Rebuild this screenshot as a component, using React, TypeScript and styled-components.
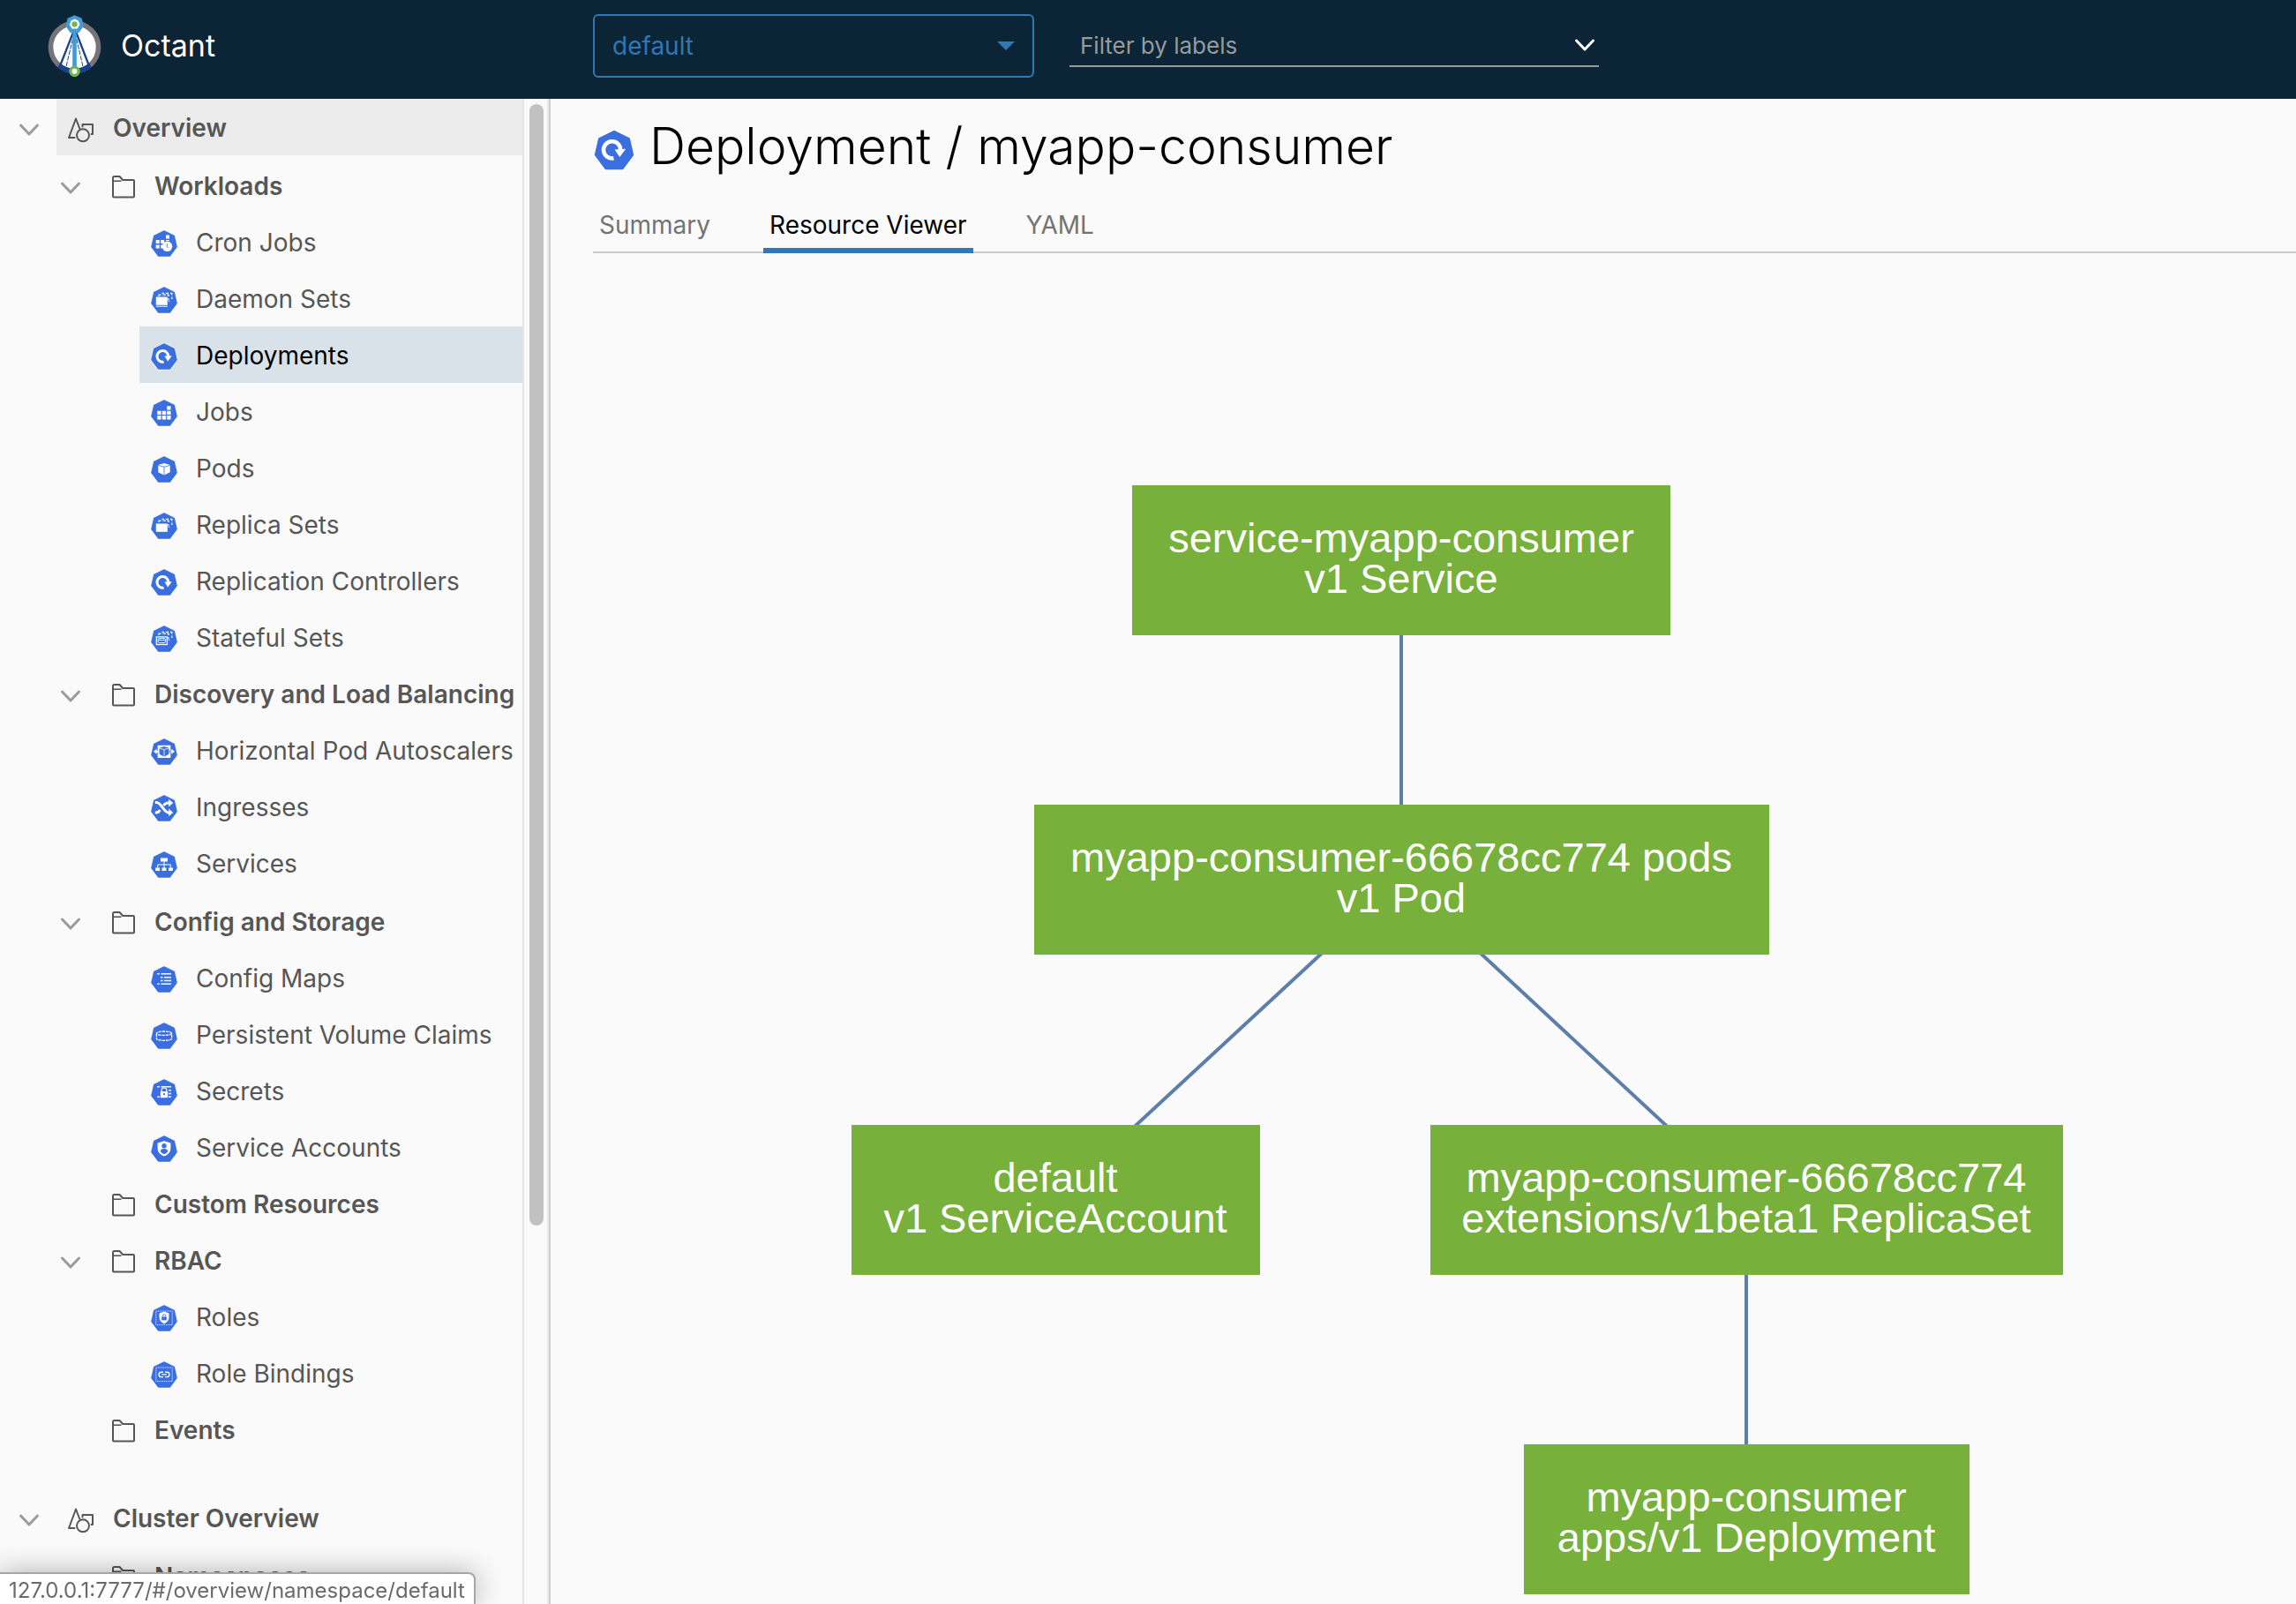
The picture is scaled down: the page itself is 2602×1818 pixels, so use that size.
import React, { useState } from 'react';
import styled, { createGlobalStyle } from 'styled-components';

const colors = {
  header: '#0b2536',
  page: '#fafafa',
  text: '#565656',
  action: '#2f78b5',
  kube: '#3b6fe0',
  node: '#77b03a',
  edge: '#5c7ea8',
};

const uiFont = `Inter, "Open Sans", "Liberation Sans", sans-serif`;

const GlobalStyle = createGlobalStyle`
  *, *::before, *::after { box-sizing: border-box; }
  body {
    margin: 0;
    background: ${colors.page};
    color: ${colors.text};
    font-family: ${uiFont};
  }
  button, input, select { font: inherit; }
`;

/* ---------- Icons ---------- */

type KubeKind =
  | 'cron' | 'daemon' | 'deploy' | 'job' | 'pod' | 'replica' | 'stateful'
  | 'hpa' | 'ingress' | 'service' | 'config' | 'pvc' | 'secret' | 'account'
  | 'role' | 'binding';

const K = colors.kube;

const StackedOutline = () => (
  <g fill="none" stroke="#fff" strokeWidth="1.2">
    <path d="M9 11V9.2H11.5M13.5 9.2H17M18.5 9.2H20V11M20 13v2.5" />
    <path d="M12.5 7.3H15M17 7.3H20M22 7.3H23.8V9.5M23.8 11.5V14M21.2 16.5H20" />
  </g>
);

const ListLines = () => (
  <path
    d="M7.3 8.8h2.5M11.5 8.8H23M11 12.7h2.5M15 12.7h8M11 16.5h2.5M15 16.5h8M7.3 20.3h2.5M11.5 20.3H23"
    stroke="#fff"
    strokeWidth="1.5"
  />
);

const Frame = () => (
  <rect x="5.8" y="7" width="18.4" height="15.6" fill="none" stroke="#fff" strokeWidth="0.8" strokeDasharray="1.2 0.8" />
);

const glyphs: Record<KubeKind, React.ReactNode> = {
  cron: (
    <g fill="#fff">
      <path d="M5.7 11h4v4h-4zM11.2 11h4v4h-4zM5.7 16.5h4v4h-4zM11.2 16.5h2v4h-2zM17 5.5h4v4h-4zM17 11h4v1h-4z" />
      <circle cx="18.5" cy="18.3" r="5.8" />
      <path d="M18.3 15.2v3.6l1.4 1.4" fill="none" stroke={K} strokeWidth="0.9" />
    </g>
  ),
  daemon: (
    <g>
      <path d="M5.8 11.5h13v9.3h-13zM5.8 21.8h13v1h-13z" fill="#fff" />
      <StackedOutline />
    </g>
  ),
  replica: (
    <g>
      <path d="M5.8 12.5h13v9.3h-13z" fill="#fff" />
      <StackedOutline />
    </g>
  ),
  stateful: (
    <g>
      <rect x="6.4" y="12.9" width="12" height="8.6" fill="none" stroke="#fff" strokeWidth="1.3" />
      <ellipse cx="12.4" cy="15.5" rx="4.2" ry="1.1" fill="none" stroke="#fff" strokeWidth="1" />
      <path d="M8.2 15.5v3c0 1.6 8.4 1.6 8.4 0v-3" fill="none" stroke="#fff" strokeWidth="1" />
      <StackedOutline />
    </g>
  ),
  deploy: (
    <g>
      <path d="M14.6 21.2A6.4 6.4 0 1 1 19.8 15" fill="none" stroke="#fff" strokeWidth="3" />
      <path d="M15.4 14.6L23.8 14.2L19.2 20.4Z" fill="#fff" />
    </g>
  ),
  job: (
    <path
      d="M7.3 12.7h4.3v4.3H7.3zM12.8 12.7h4.3v4.3h-4.3zM18.2 12.7h4.3v4.3h-4.3zM7.3 18.1h4.3v4.3H7.3zM12.8 18.1h4.3v4.3h-4.3zM18.2 18.1h4.3v4.3h-4.3zM18.2 7.2h4.3v4.3h-4.3z"
      fill="#fff"
    />
  ),
  pod: (
    <g>
      <path d="M8.3 10.1L15 8L21.7 10.1V18.2L15 21.4L8.3 18.2Z" fill="#fff" />
      <path d="M8.3 10.4L15 12.2L21.7 10.4M15 12.2V21.4" fill="none" stroke={K} strokeWidth="0.8" />
    </g>
  ),
  hpa: (
    <g>
      <path d="M7.7 7.8h14.6v14.2H7.7zM3 14.8l3.6-3v2H9v2H6.6v2zM27 14.8l-3.6-3v2H21v2h2.4v2z" fill="#fff" />
      <path d="M9.6 10.8L15 9L20.4 10.8V17.8L15 20.8L9.6 17.8Z" fill={K} />
      <path d="M9.6 11L15 12.6L20.4 11M15 12.6V20.8" fill="none" stroke="#fff" strokeWidth="0.8" />
    </g>
  ),
  ingress: (
    <g>
      <path d="M4.8 8.5H6.5C11.5 8.5 15 20 19.5 20H21" fill="none" stroke="#fff" strokeWidth="3" />
      <path d="M4.8 20H6.5C8.2 20 9.4 18.8 10.5 17.2M14.5 12C16 9.8 17.5 9 19.5 9H21" fill="none" stroke="#fff" strokeWidth="3" />
      <path d="M20.2 4.8L25.2 9L20.2 13.4ZM20.2 15.6L25.2 20L20.2 24.2Z" fill="#fff" />
    </g>
  ),
  service: (
    <g>
      <path d="M11 7.6h8v3.9h-8zM5.2 18.4h4.9v3.6H5.2zM12.5 18.4h4.9v3.6h-4.9zM20 18.4h4.9v3.6H20z" fill="#fff" />
      <path d="M15 11v8M7.7 18.5V15H22.3V18.5" fill="none" stroke="#fff" strokeWidth="1" />
    </g>
  ),
  config: <ListLines />,
  pvc: (
    <g fill="none" stroke="#fff" strokeWidth="1.3" strokeDasharray="3.4 0.8">
      <ellipse cx="15" cy="12.2" rx="8.6" ry="2.2" />
      <path d="M6.4 12.5V18.2C6.4 21 23.6 21 23.6 18.2V12.5" />
    </g>
  ),
  secret: (
    <g>
      <ListLines />
      <path d="M10 12h10v10H10z" fill={K} />
      <path d="M10.8 14h8.4v7.2h-8.4z" fill="#fff" />
      <path d="M12.2 14V12.6a2.8 2.6 0 0 1 5.6 0V14" fill="none" stroke="#fff" strokeWidth="1.2" />
      <circle cx="15" cy="17.2" r="1.1" fill={K} />
    </g>
  ),
  account: (
    <g>
      <path d="M15 6.2L22.4 8.6V14.5C22.4 18.8 19.5 21.8 15 23.4C10.5 21.8 7.6 18.8 7.6 14.5V8.6Z" fill="#fff" />
      <circle cx="15" cy="11.8" r="2.7" fill={K} />
      <path d="M10.8 18a4.2 3 0 0 1 8.4 0A6 6 0 0 1 15 21.2A6 6 0 0 1 10.8 18Z" fill={K} />
    </g>
  ),
  role: (
    <g>
      <Frame />
      <path d="M15 7.5L20.5 9.4V14C20.5 17.4 18.3 19.9 15 21.4C11.7 19.9 9.5 17.4 9.5 14V9.4Z" fill="#fff" />
      <path d="M12.2 13.4h5.6v4h-5.6z" fill={K} />
      <path d="M13.3 13.5V12.4a1.7 1.7 0 0 1 3.4 0v1.1" fill="none" stroke={K} strokeWidth="0.9" />
    </g>
  ),
  binding: (
    <g>
      <Frame />
      <path
        d="M14 12.2H11.8a2.7 2.7 0 0 0 0 5.4H14M16 12.2H18.2a2.7 2.7 0 0 1 0 5.4H16M12.2 14.9H17.8"
        fill="none"
        stroke="#fff"
        strokeWidth="1.4"
      />
    </g>
  ),
};

const heptagon = 'M15 1L26.2 6.5L29 18.7L21.3 29H8.7L1 18.7L3.8 6.5Z';

const KubeIcon = ({ kind, size = 32 }: { kind: KubeKind; size?: number }) => (
  <svg width={size} height={size} viewBox="-1 -1 32 32" aria-hidden="true">
    <path d={heptagon} fill={K} stroke="#fff" strokeWidth="3" strokeLinejoin="round" />
    <path d={heptagon} fill={K} stroke={K} strokeWidth="1.6" strokeLinejoin="round" />
    {glyphs[kind]}
  </svg>
);

const FolderIcon = () => (
  <svg width="32" height="32" viewBox="0 0 32 32" fill="none" stroke={colors.text} strokeWidth="2" strokeLinejoin="round" aria-hidden="true">
    <path d="M5 26.5V5.5Q5 4 6.500 4H12.5L16.2 8H28Q29 8 29 9V26.5Q29 27.5 28 27.5H6Q5 27.5 5 26.5Z" />
    <path d="M5 9.2H14.5" strokeWidth="1.6" />
  </svg>
);

const ShapesIcon = () => (
  <svg width="32" height="32" viewBox="1 -1 32 32" fill="none" stroke={colors.text} strokeWidth="2" strokeLinejoin="round" strokeLinecap="round" aria-hidden="true">
    <path d="M9.5 25H3L11 3.5L15.2 14.5" />
    <path d="M18.5 12.5V10H30V21H28.5" />
    <circle cx="19" cy="22.3" r="7" />
  </svg>
);

const Chevron = ({ color }: { color: string }) => (
  <svg width="24" height="24" viewBox="0 0 24 24" fill="none" stroke={color} strokeWidth="3" strokeLinecap="round" strokeLinejoin="round" aria-hidden="true">
    <path d="M2.5 7L12 17L21.5 7" />
  </svg>
);

const Logo = () => (
  <svg width="61" height="72" viewBox="40 24 184 216" aria-hidden="true">
    <circle cx="132" cy="136" r="81.5" fill="#fff" stroke="#767478" strokeWidth="17" />
    <path d="M82 191L74 206A90 90 0 0 0 190 206L182 191A74 74 0 0 1 82 191Z" fill="#15438f" />
    <path d="M128 84L84 196M137 84L180 196" stroke="#15438f" strokeWidth="7" />
    <path d="M126 108L103 204M139 108L161 204" stroke="#15438f" strokeWidth="3" strokeDasharray="16 4" />
    <path d="M132 80V206" stroke="#429bd7" strokeWidth="14" />
    <path d="M132 27L157 38L163 65L147 87H117L102 65L108 38Z" fill="#429bd7" />
    <path d="M132 40L145 46L150 59L142 73H123L115 59L120 46Z" fill="#fff" />
    <circle cx="132" cy="58" r="9.5" fill="#72b64c" />
    <circle cx="132" cy="219" r="14" fill="#fff" stroke="#72b64c" strokeWidth="10" />
  </svg>
);

/* ---------- Layout ---------- */

const Shell = styled.div`
  display: flex;
  flex-direction: column;
  height: 100vh;
  overflow: hidden;
`;

const Header = styled.header`
  display: flex;
  align-items: center;
  flex: none;
  padding: 16px 0 24px;
  background: ${colors.header};
`;

const Brand = styled.a`
  display: flex;
  align-items: center;
  gap: 22px;
  width: 672px;
  padding-left: 54px;
  color: #fff;
  font-size: 34px;
  line-height: 40px;
  text-decoration: none;
`;

const SelectBox = styled.div`
  position: relative;
  width: 500px;
  margin-right: 40px;
`;

const NamespaceSelect = styled.select`
  appearance: none;
  display: block;
  width: 100%;
  height: 72px;
  padding: 0 60px 0 20px;
  border: 2px solid ${colors.action};
  border-radius: 6px;
  background: transparent;
  color: ${colors.action};
  font-size: 28px;
  cursor: pointer;
`;

const SelectArrow = styled.span`
  position: absolute;
  top: 50%;
  right: 22px;
  border: 10px solid transparent;
  border-top-color: ${colors.action};
  border-bottom: 0;
  transform: translateY(-50%);
  pointer-events: none;
`;

const FilterBox = styled.div`
  display: flex;
  align-items: center;
  width: 600px;
  height: 48px;
  padding: 0 4px 0 12px;
  border-bottom: 2px solid #9a9a9a;
`;

const FilterInput = styled.input`
  flex: 1;
  min-width: 0;
  padding: 0;
  border: 0;
  outline: 0;
  background: transparent;
  color: #fff;
  font-size: 26px;
  &::placeholder { color: #9a9a9a; opacity: 1; }
`;

const PlainButton = styled.button`
  display: flex;
  padding: 0;
  border: 0;
  background: none;
  cursor: pointer;
`;

const Body = styled.div`
  display: flex;
  flex: 1;
  min-height: 0;
`;

const Sidebar = styled.nav`
  flex: none;
  width: 594px;
  overflow: hidden;
  border-right: 2px solid #e6e6e6;
`;

const ScrollTrack = styled.div`
  flex: none;
  width: 30px;
  padding: 6px 4px 6px 6px;
  border-right: 2px solid #cfcfcf;
  box-shadow: inset -2px 0 #e8e8e8;
`;

const ScrollThumb = styled.div`
  width: 16px;
  height: 75%;
  border-radius: 8px;
  background: #c1c1c1;
`;

/* ---------- Navigation tree ---------- */

const Tree = styled.ul`
  margin: 0;
  padding: 0;
  list-style: none;
`;

const Section = styled.li`
  margin-bottom: 36px;
`;

const Groups = styled(Tree)`
  padding: 2px 0 0 47px;
`;

const Group = styled.li<{ $spaced?: boolean }>`
  margin-bottom: ${(p) => (p.$spaced ? 2 : 0)}px;
`;

const Leaves = styled(Tree)`
  padding-left: 111px;
`;

const Row = styled.div`
  display: flex;
  height: 64px;
`;

const CaretCell = styled.div`
  display: flex;
  flex: none;
  align-items: center;
  width: 64px;
  padding: 5px 0 0 21px;
`;

const NavLink = styled.a<{ $strong?: boolean; $tone?: 'hover' | 'active' }>`
  display: flex;
  flex: 1;
  align-items: center;
  gap: 20px;
  height: 64px;
  padding: 2px 0 0 12px;
  background: ${(p) => (p.$tone === 'active' ? '#d9e2e8' : p.$tone === 'hover' ? '#ececec' : 'transparent')};
  color: ${(p) => (p.$tone === 'active' ? '#000' : colors.text)};
  font-size: 28px;
  font-weight: ${(p) => (p.$strong ? 600 : 400)};
  line-height: 32px;
  text-decoration: none;
  white-space: nowrap;
  svg { flex: none; margin-top: 2px; }
`;

/* ---------- Main area ---------- */

const Main = styled.main`
  display: flex;
  flex: 1;
  flex-direction: column;
  min-width: 0;
  padding-left: 48px;
`;

const Title = styled.h1`
  display: flex;
  align-items: center;
  gap: 16px;
  margin: 0;
  padding-top: 22px;
  color: #000;
  font-size: 57px;
  font-weight: 300;
  line-height: 64px;
  svg { margin-top: 8px; }
`;

const Tabs = styled.div`
  display: flex;
  gap: 53px;
  margin-top: 32px;
  border-bottom: 2px solid #ccc;
`;

const Tab = styled.button<{ $active: boolean }>`
  height: 57px;
  margin-bottom: -2px;
  padding: 0 7px 2px;
  border: 0;
  border-bottom: 6px solid ${(p) => (p.$active ? colors.action : 'transparent')};
  background: none;
  color: ${(p) => (p.$active ? '#000' : '#737373')};
  font-size: 28px;
  line-height: 40px;
  cursor: pointer;
`;

const Canvas = styled.div`
  position: relative;
  flex: 1;
  overflow: hidden;
`;

const Edges = styled.svg`
  position: absolute;
  inset: 0;
  width: 100%;
  height: 100%;
`;

const GraphNode = styled.div<{ $x: number; $y: number; $w: number }>`
  position: absolute;
  left: ${(p) => p.$x - p.$w / 2}px;
  top: ${(p) => p.$y - 85}px;
  display: flex;
  flex-direction: column;
  align-items: center;
  justify-content: center;
  width: ${(p) => p.$w}px;
  height: 170px;
  padding-bottom: 4px;
  background: ${colors.node};
  color: #fff;
  font-family: "Liberation Sans", Helvetica, Arial, sans-serif;
  font-size: 47px;
  line-height: 46px;
  white-space: nowrap;
`;

const StatusBubble = styled.div`
  position: fixed;
  bottom: 0;
  left: 0;
  padding: 4px 10px 0;
  border: solid #a6a6a6;
  border-width: 2px 2px 0 0;
  border-radius: 0 8px 0 0;
  background: #fff;
  box-shadow: 0 0 32px rgba(0, 0, 0, 0.3);
  color: #6a6a6a;
  font-size: 24px;
  line-height: 30px;
`;

/* ---------- Data ---------- */

interface GroupData {
  label: string;
  spaced?: boolean;
  items: { label: string; kind: KubeKind }[];
}

const overview: GroupData[] = [
  {
    label: 'Workloads',
    items: [
      { label: 'Cron Jobs', kind: 'cron' },
      { label: 'Daemon Sets', kind: 'daemon' },
      { label: 'Deployments', kind: 'deploy' },
      { label: 'Jobs', kind: 'job' },
      { label: 'Pods', kind: 'pod' },
      { label: 'Replica Sets', kind: 'replica' },
      { label: 'Replication Controllers', kind: 'deploy' },
      { label: 'Stateful Sets', kind: 'stateful' },
    ],
  },
  {
    label: 'Discovery and Load Balancing',
    spaced: true,
    items: [
      { label: 'Horizontal Pod Autoscalers', kind: 'hpa' },
      { label: 'Ingresses', kind: 'ingress' },
      { label: 'Services', kind: 'service' },
    ],
  },
  {
    label: 'Config and Storage',
    items: [
      { label: 'Config Maps', kind: 'config' },
      { label: 'Persistent Volume Claims', kind: 'pvc' },
      { label: 'Secrets', kind: 'secret' },
      { label: 'Service Accounts', kind: 'account' },
    ],
  },
  { label: 'Custom Resources', items: [] },
  {
    label: 'RBAC',
    items: [
      { label: 'Roles', kind: 'role' },
      { label: 'Role Bindings', kind: 'binding' },
    ],
  },
  { label: 'Events', items: [] },
];

const sections = [
  { label: 'Overview', groups: overview },
  { label: 'Cluster Overview', groups: [{ label: 'Namespaces', items: [] }] as GroupData[] },
];

const nodes = [
  { id: 'svc', x: 916, y: 348, w: 610, lines: ['service-myapp-consumer', 'v1 Service'] },
  { id: 'pod', x: 916, y: 710, w: 833, lines: ['myapp-consumer-66678cc774 pods', 'v1 Pod'] },
  { id: 'sa', x: 524, y: 1073, w: 463, lines: ['default', 'v1 ServiceAccount'] },
  { id: 'rs', x: 1307, y: 1073, w: 717, lines: ['myapp-consumer-66678cc774', 'extensions/v1beta1 ReplicaSet'] },
  { id: 'dep', x: 1307, y: 1435, w: 505, lines: ['myapp-consumer', 'apps/v1 Deployment'] },
];

const edges = [['svc', 'pod'], ['pod', 'sa'], ['pod', 'rs'], ['rs', 'dep']];

const nodeById = (id: string) => nodes.find((n) => n.id === id)!;

const tabs = ['Summary', 'Resource Viewer', 'YAML'];

const GroupItem = ({ group }: { group: GroupData }) => {
  const [open, setOpen] = useState(true);
  return (
    <Group $spaced={group.spaced}>
      <Row>
        <CaretCell>
          {group.items.length > 0 && (
            <PlainButton aria-label={`Toggle ${group.label}`} aria-expanded={open} onClick={() => setOpen(!open)}>
              <Chevron color="#9a9a9a" />
            </PlainButton>
          )}
        </CaretCell>
        <NavLink href="#" $strong>
          <FolderIcon />
          {group.label}
        </NavLink>
      </Row>
      {open && group.items.length > 0 && (
        <Leaves>
          {group.items.map((item) => (
            <li key={item.label}>
              <NavLink href="#" $tone={item.label === 'Deployments' ? 'active' : undefined}>
                <KubeIcon kind={item.kind} />
                {item.label}
              </NavLink>
            </li>
          ))}
        </Leaves>
      )}
    </Group>
  );
};

export default function App() {
  const [tab, setTab] = useState('Resource Viewer');
  return (
    <Shell>
      <GlobalStyle />
      <Header>
        <Brand href="#">
          <Logo />
          Octant
        </Brand>
        <SelectBox>
          <NamespaceSelect aria-label="Namespace" defaultValue="default">
            <option value="default">default</option>
          </NamespaceSelect>
          <SelectArrow />
        </SelectBox>
        <FilterBox>
          <FilterInput aria-label="Filter by labels" placeholder="Filter by labels" />
          <PlainButton aria-label="Show filters">
            <Chevron color="#fff" />
          </PlainButton>
        </FilterBox>
      </Header>
      <Body>
        <Sidebar aria-label="Resources">
          <Tree>
            {sections.map((section, i) => (
              <Section key={section.label}>
                <Row>
                  <CaretCell>
                    <PlainButton aria-label={`Toggle ${section.label}`}>
                      <Chevron color="#9a9a9a" />
                    </PlainButton>
                  </CaretCell>
                  <NavLink href="#" $strong $tone={i === 0 ? 'hover' : undefined}>
                    <ShapesIcon />
                    {section.label}
                  </NavLink>
                </Row>
                <Groups>
                  {section.groups.map((group) => (
                    <GroupItem key={group.label} group={group} />
                  ))}
                </Groups>
              </Section>
            ))}
          </Tree>
        </Sidebar>
        <ScrollTrack>
          <ScrollThumb />
        </ScrollTrack>
        <Main>
          <Title>
            <KubeIcon kind="deploy" size={48} />
            Deployment / myapp-consumer
          </Title>
          <Tabs role="tablist">
            {tabs.map((name) => (
              <Tab key={name} role="tab" aria-selected={tab === name} $active={tab === name} onClick={() => setTab(name)}>
                {name}
              </Tab>
            ))}
          </Tabs>
          <Canvas>
            <Edges aria-hidden="true">
              {edges.map(([from, to]) => {
                const a = nodeById(from);
                const b = nodeById(to);
                return (
                  <line key={from + to} x1={a.x} y1={a.y} x2={b.x} y2={b.y} stroke={colors.edge} strokeWidth="4" />
                );
              })}
            </Edges>
            {nodes.map((node) => (
              <GraphNode key={node.id} $x={node.x} $y={node.y} $w={node.w}>
                {node.lines.map((line) => (
                  <span key={line}>{line}</span>
                ))}
              </GraphNode>
            ))}
          </Canvas>
        </Main>
      </Body>
      <StatusBubble>127.0.0.1:7777/#/overview/namespace/default</StatusBubble>
    </Shell>
  );
}
